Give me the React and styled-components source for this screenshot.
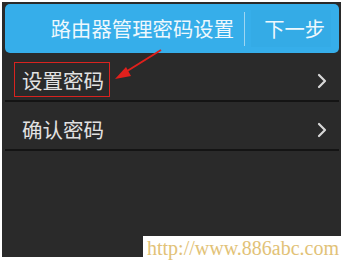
import React from "react";
import styled, { createGlobalStyle } from "styled-components";

const Global = createGlobalStyle`
  html, body { margin: 0; padding: 0; background: #ffffff; }
  body { width: 344px; height: 260px; overflow: hidden; font-family: "Noto Sans CJK SC", "Noto Sans", sans-serif; }
`;

const Stage = styled.div`
  position: relative;
  width: 344px;
  height: 260px;
  box-sizing: border-box;
  padding: 2px 3px 3px 2px;
`;

const Screen = styled.div`
  height: 100%;
  box-sizing: border-box;
  background: #2a2a2a;
  padding: 2px 2px 0 3px;
  display: flex;
  flex-direction: column;
`;

const Header = styled.div`
  height: 49px;
  flex: none;
  background: #36aeea;
  border-radius: 5px;
  display: flex;
  align-items: center;
  justify-content: flex-end;
  padding-right: 8px;
  color: #eef8fd;
  font-size: 20.3px;
  line-height: 1;
`;

const Title = styled.span`
  letter-spacing: 0.1px;
`;

const Divider = styled.span`
  width: 1px;
  height: 34px;
  background: #9ed6f2;
  margin: 0 6px 0 10px;
`;

const NextButton = styled.span`
  padding: 8px 6px 8px 13px;
  background: #34abe6;
`;

const Row = styled.div`
  height: 49px;
  flex: none;
  box-sizing: border-box;
  display: flex;
  align-items: center;
  padding: 6px 12px 0 9px;
  border-bottom: 2px solid #141414;
  color: #e2e2e2;
  font-size: 20.5px;
`;

const Label = styled.span`
  flex: 1;
  display: flex;
`;

const LabelText = styled.span`
  height: 35px;
  box-sizing: border-box;
  display: flex;
  align-items: center;
  padding: 2px 5px 0 7px;
  border: 1px solid ${(p) => (p.$marked ? "#d9231f" : "transparent")};
  line-height: 1;
`;

const ChevronIcon = styled.svg`
  margin-top: 2px;
`;

const Chevron = () => (
  <ChevronIcon width="10" height="16" viewBox="0 0 10 16">
    <path d="M2 2 L8 8 L2 14" fill="none" stroke="#d8d8d8" strokeWidth="2.2" strokeLinecap="round" strokeLinejoin="round" />
  </ChevronIcon>
);

const ArrowOverlay = styled.svg`
  position: absolute;
  left: 0;
  top: 0;
  pointer-events: none;
`;

const Watermark = styled.div`
  position: absolute;
  right: 0;
  bottom: 0;
  width: 201px;
  height: 24px;
  background: #ffffff;
  color: #e2c277;
  font-family: "Liberation Serif", serif;
  font-size: 20px;
  line-height: 24px;
  padding-left: 4px;
  box-sizing: border-box;
  white-space: nowrap;
`;

export default function App() {
  return (
    <>
      <Global />
      <Stage>
        <Screen>
          <Header>
            <Title>路由器管理密码设置</Title>
            <Divider />
            <NextButton>下一步</NextButton>
          </Header>
          <Row>
            <Label><LabelText $marked>设置密码</LabelText></Label>
            <Chevron />
          </Row>
          <Row>
            <Label><LabelText>确认密码</LabelText></Label>
            <Chevron />
          </Row>
        </Screen>
        <ArrowOverlay width="344" height="260" viewBox="0 0 344 260">
          <line x1="161" y1="50" x2="124" y2="73" stroke="#e0201c" strokeWidth="2" />
          <polygon points="115,79 126,67 131,76" fill="#e0201c" />
        </ArrowOverlay>
        <Watermark>http://www.886abc.com</Watermark>
      </Stage>
    </>
  );
}
